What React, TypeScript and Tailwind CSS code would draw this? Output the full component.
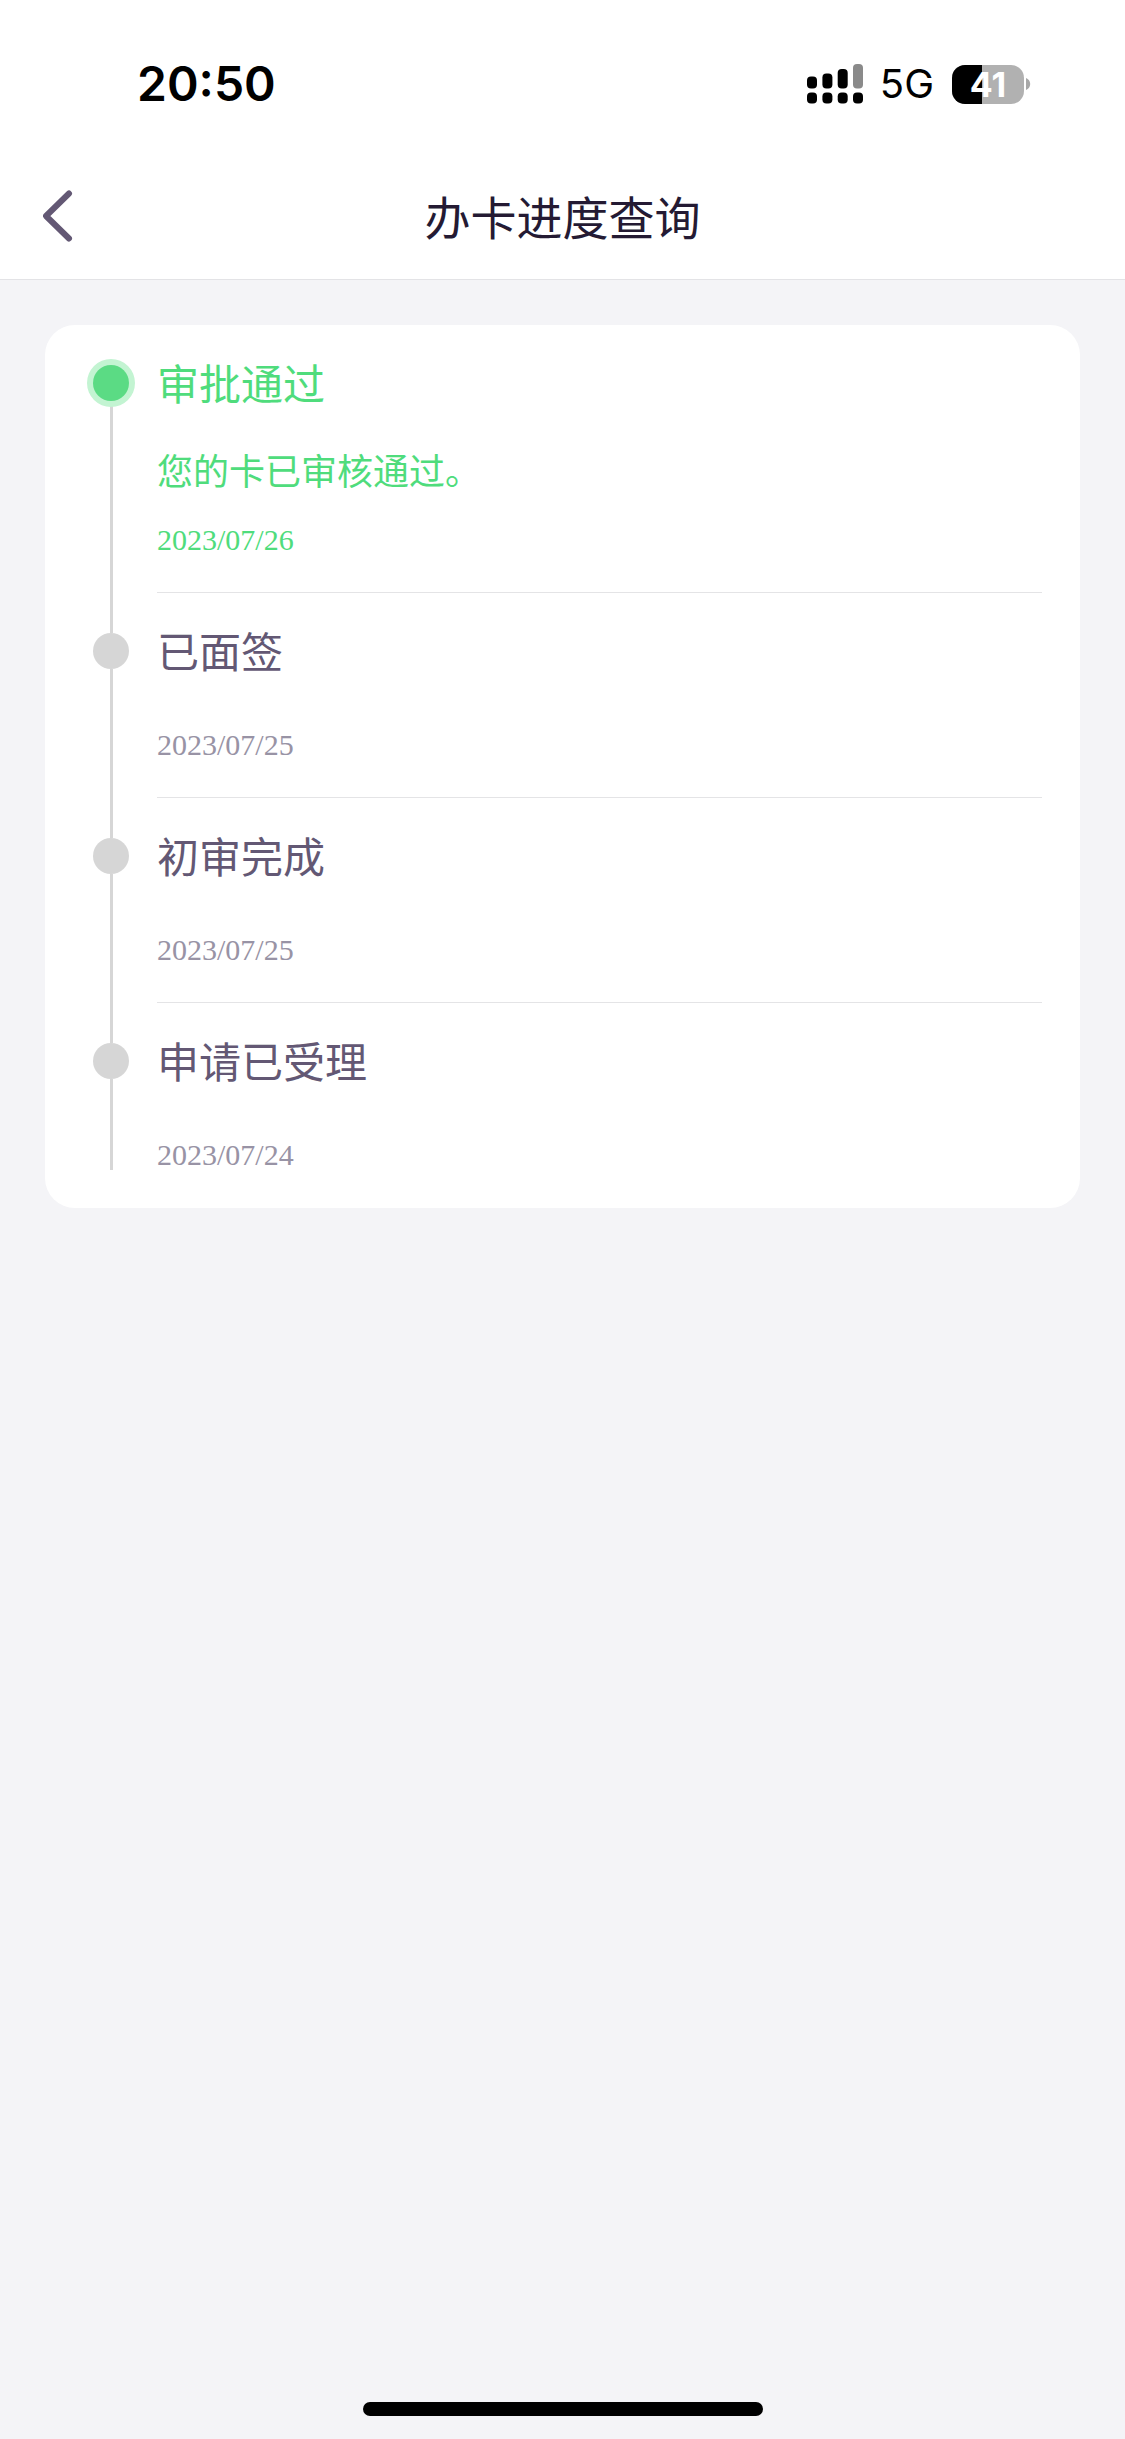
type Step = {
  title: string
  desc?: string
  date: string
}

const steps: Step[] = [
  { title: '审批通过', desc: '您的卡已审核通过。', date: '2023/07/26' },
  { title: '已面签', date: '2023/07/25' },
  { title: '初审完成', date: '2023/07/25' },
  { title: '申请已受理', date: '2023/07/24' },
]

function SignalIcon() {
  return (
    <svg width="56" height="40" viewBox="0 0 56 40" aria-hidden="true">
      <rect x="0" y="12.5" width="10" height="12" rx="4" />
      <rect x="15.4" y="9.5" width="10" height="15" rx="4" />
      <rect x="30.7" y="5" width="10" height="19.5" rx="4" />
      <rect x="46" y="0" width="10" height="24.5" rx="4" fill="#8a8a8a" />
      <rect x="0" y="28.5" width="10" height="11" rx="4" />
      <rect x="15.4" y="28.5" width="10" height="11" rx="4" />
      <rect x="30.7" y="28.5" width="10" height="11" rx="4" />
      <rect x="46" y="28.5" width="10" height="11" rx="4" />
    </svg>
  )
}

function Battery({ level }: { level: number }) {
  return (
    <div className="flex items-center gap-[2px]">
      <div className="relative h-[39px] w-[72px] overflow-hidden rounded-[13px] bg-[#b1b1b1]">
        <div className="h-full bg-black" style={{ width: `${level}%` }} />
        <span className="absolute inset-0 flex items-center justify-center text-[34px] font-bold text-white">
          {level}
        </span>
      </div>
      <svg width="5" height="12" viewBox="0 0 5 12" aria-hidden="true">
        <path d="M0 0C2.5 1 4.2 3.2 4.2 6S2.5 11 0 12Z" fill="#a8a8a8" />
      </svg>
    </div>
  )
}

function StatusBar() {
  return (
    <div className="flex h-[152px] items-center justify-between pt-4 pr-[94px] pl-[137px] font-['Inter','Liberation_Sans',sans-serif] text-black">
      <span className="text-[48px] font-semibold">20:50</span>
      <div className="flex items-center">
        <SignalIcon />
        <span className="ml-[17px] text-[40px]">5G</span>
        <div className="ml-[18px]">
          <Battery level={41} />
        </div>
      </div>
    </div>
  )
}

function StepItem({ step, first, last }: { step: Step; first: boolean; last: boolean }) {
  return (
    <li className="flex gap-7">
      <div className="flex w-9 flex-col items-center">
        <div className={`h-10 w-[3px] ${first ? '' : 'bg-[#d6d6d6]'}`} />
        <div
          className={`z-10 size-9 rounded-full ${first ? 'bg-[#5bdb84] ring-6 ring-[#c3f4d2]' : 'bg-[#d6d6d6]'}`}
        />
        <div className={`w-[3px] flex-1 bg-[#d6d6d6] ${last ? 'mb-[37px]' : ''}`} />
      </div>
      <div className={`flex-1 pt-7 pb-8 ${last ? '' : 'border-b border-[#e4e4e6]'} ${first ? 'text-[#4fdc7c]' : ''}`}>
        <h2 className={`text-[42px] leading-[58px] ${first ? '' : 'text-[#635874]'}`}>{step.title}</h2>
        {step.desc && <p className="mt-[30px] text-[36px] leading-[56px]">{step.desc}</p>}
        <time
          className={`block font-['Liberation_Serif',serif] text-[30px] leading-10 ${step.desc ? 'mt-[23px]' : 'mt-[46px]'} ${first ? '' : 'text-[#9893a5]'}`}
        >
          {step.date}
        </time>
      </div>
    </li>
  )
}

export default function App() {
  return (
    <div className="flex min-h-screen flex-col bg-[#f4f4f7] font-['Noto_Sans_CJK_SC',sans-serif]">
      <header className="border-b border-[#e3e3e6] bg-white">
        <StatusBar />
        <div className="grid h-[127px] grid-cols-[1fr_auto_1fr] items-center">
          <button type="button" aria-label="返回" className="w-fit pl-[43px]">
            <svg width="30" height="52" viewBox="0 0 30 52" fill="none" aria-hidden="true">
              <path
                d="M26 3.5 3 26 26 48.5"
                stroke="#635874"
                strokeWidth="6"
                strokeLinecap="round"
                strokeLinejoin="round"
              />
            </svg>
          </button>
          <h1 className="text-[46px] text-[#241a33]">办卡进度查询</h1>
        </div>
      </header>

      <main className="mx-[45px] mt-[45px] rounded-[30px] bg-white pr-[38px] pb-px pl-12">
        <ol>
          {steps.map((step, i) => (
            <StepItem key={step.title} step={step} first={i === 0} last={i === steps.length - 1} />
          ))}
        </ol>
      </main>

      <div className="mx-auto mt-auto mb-[23px] h-[14px] w-[400px] rounded-full bg-black" />
    </div>
  )
}
